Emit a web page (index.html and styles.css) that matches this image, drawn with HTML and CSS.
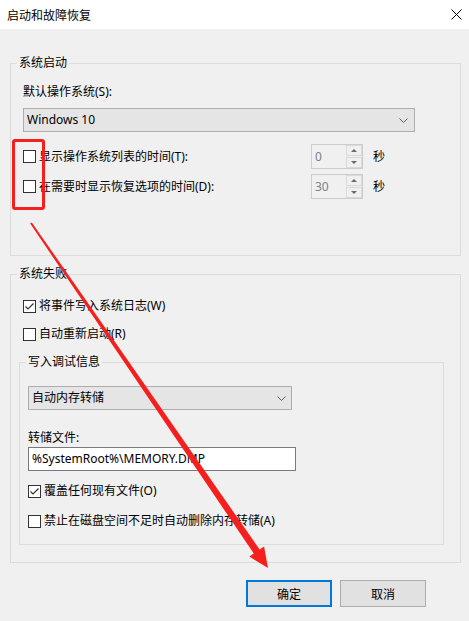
FILE: index.html
```html
<!DOCTYPE html>
<html lang="zh-CN">
<head>
<meta charset="utf-8">
<title>启动和故障恢复</title>
<link rel="stylesheet" href="styles.css">
</head>
<body>
<div class="window">
  <div class="titlebar">
    <span class="title">启动和故障恢复</span>
    <svg class="close" width="11" height="11" viewBox="0 0 11 11"><path d="M0.5 0.5 L10.5 10.5 M10.5 0.5 L0.5 10.5" stroke="#000" stroke-width="1" fill="none"/></svg>
  </div>
  <div class="content">
    <fieldset class="group g1">
      <legend>系统启动</legend>
      <div class="label">默认操作系统(S):</div>
      <div class="select wide"><span>Windows 10</span><svg width="9" height="5" viewBox="0 0 9 5"><path d="M0.5 0.5 L4.5 4.5 L8.5 0.5" stroke="#5a5a5a" fill="none"/></svg></div>
      <div class="timerows">
        <div class="timerow">
          <div class="check"><span class="box"></span><span>显示操作系统列表的时间(T):</span></div>
          <div class="spin"><span class="val">0</span><div class="btns"><span><i class="up"></i></span><span><i class="down"></i></span></div></div>
          <span class="unit">秒</span>
        </div>
        <div class="timerow">
          <div class="check"><span class="box"></span><span>在需要时显示恢复选项的时间(D):</span></div>
          <div class="spin"><span class="val">30</span><div class="btns"><span><i class="up"></i></span><span><i class="down"></i></span></div></div>
          <span class="unit">秒</span>
        </div>
      </div>
    </fieldset>

    <fieldset class="group g2">
      <legend>系统失败</legend>
      <div class="check row r1"><span class="box checked"><svg width="11" height="11" viewBox="0 0 11 11"><path d="M1.5 5.5 L4 8 L9.5 2.5" stroke="#333" stroke-width="1.2" fill="none"/></svg></span><span>将事件写入系统日志(W)</span></div>
      <div class="check row r2"><span class="box"></span><span>自动重新启动(R)</span></div>
      <fieldset class="group g3">
        <legend>写入调试信息</legend>
        <div class="select narrow"><span>自动内存转储</span><svg width="9" height="5" viewBox="0 0 9 5"><path d="M0.5 0.5 L4.5 4.5 L8.5 0.5" stroke="#5a5a5a" fill="none"/></svg></div>
        <div class="label dumplabel">转储文件:</div>
        <div class="textbox">%SystemRoot%\MEMORY.DMP</div>
        <div class="check row r3"><span class="box checked"><svg width="11" height="11" viewBox="0 0 11 11"><path d="M1.5 5.5 L4 8 L9.5 2.5" stroke="#333" stroke-width="1.2" fill="none"/></svg></span><span>覆盖任何现有文件(O)</span></div>
        <div class="check row r4"><span class="box"></span><span>禁止在磁盘空间不足时自动删除内存转储(A)</span></div>
      </fieldset>
    </fieldset>

    <div class="buttons">
      <button class="btn default">确定</button>
      <button class="btn">取消</button>
    </div>
  </div>

  <div class="mark-rect"></div>
  <svg class="mark-arrow" width="469" height="621" viewBox="0 0 469 621">
    <polygon points="31.8,222.4 259.6,549.5 264.1,546.4 268,568 249.3,556.6 253.8,553.5 30.2,223.6" fill="#f5201e"/>
  </svg>
</div>
</body>
</html>
```

FILE: styles.css
```css
html, body {
  margin: 0;
  padding: 0;
}
body {
  background: #f0f0f0;
  font-family: "Noto Sans", "Noto Sans CJK SC", sans-serif;
  font-size: 12px;
  line-height: 16px;
  color: #000;
  width: 469px;
  height: 621px;
  overflow: hidden;
}
.window {
  position: relative;
  height: 621px;
}
.titlebar {
  height: 29px;
  background: #fff;
  display: flex;
  align-items: center;
  justify-content: space-between;
  padding: 0 7px 0 7px;
  box-sizing: border-box;
}
.title {
  font-family: "Noto Sans CJK SC", sans-serif;
}
.close {
  display: block;
  margin-top: -1px;
}
.content {
  padding: 26px 8px 0 10px;
}
.group {
  margin: 0;
  min-width: 0;
  border: 1px solid #dcdcdc;
}
.group > legend {
  padding: 0 2px;
  line-height: 16px;
  color: #000;
}
.g1 {
  padding: 13px 0 56px 12px;
}
.g1 > legend {
  margin-left: -6px;
}
.label {
  height: 16px;
}
.select {
  margin-top: 8px;
  height: 24px;
  box-sizing: border-box;
  border: 1px solid #adadad;
  background: #e5e5e5;
  display: flex;
  align-items: center;
  justify-content: space-between;
  padding: 0 6px 0 3px;
}
.select svg {
  display: block;
}
.select.wide {
  width: 392px;
}
.timerows {
  margin-top: 12px;
  display: flex;
  flex-direction: column;
  gap: 5px;
}
.timerow {
  display: grid;
  grid-template-columns: 288px 52px auto;
  align-items: center;
  height: 25px;
}
.check {
  display: flex;
  align-items: center;
  gap: 3px;
  height: 16px;
}
.box {
  width: 13px;
  height: 13px;
  box-sizing: border-box;
  border: 1px solid #333;
  background: #fff;
  flex: none;
  display: flex;
  align-items: center;
  justify-content: center;
}
.box svg {
  display: block;
}
.spin {
  width: 52px;
  height: 25px;
  box-sizing: border-box;
  border: 1px solid #cccccc;
  background: #f0f0f0;
  display: flex;
}
.spin .val {
  flex: 1;
  padding-left: 3px;
  line-height: 23px;
  color: #7a8088;
}
.btns {
  width: 16px;
  display: flex;
  flex-direction: column;
  gap: 1px;
}
.btns span {
  flex: 1;
  border: 1px solid #dadada;
  display: flex;
  align-items: center;
  justify-content: center;
}
.btns i {
  width: 0;
  height: 0;
  border-left: 3px solid transparent;
  border-right: 3px solid transparent;
}
.btns i.up {
  border-bottom: 3px solid #6a6a6a;
}
.btns i.down {
  border-top: 3px solid #6a6a6a;
}
.unit {
  margin-left: 10px;
}
.group.g2 {
  margin-top: 10px;
  padding: 16px 16px 17px 8px;
}
.g2 > legend {
  margin-left: -2px;
}
.row {
  padding-left: 4px;
}
.r2 {
  margin-top: 12px;
}
.group.g3 {
  margin-top: 12px;
  padding: 16px 0 15px 8px;
}
.g3 > legend {
  margin-left: -2px;
}
.g3 .row {
  padding-left: 0;
}
.select.narrow {
  margin-top: 0;
  width: 264px;
  padding: 0 5px 0 3px;
}
.dumplabel {
  margin-top: 20px;
}
.textbox {
  margin-top: 1px;
  width: 268px;
  height: 24px;
  box-sizing: border-box;
  border: 1px solid #7a7a7a;
  background: #fff;
  padding-left: 3px;
  line-height: 22px;
}
.r3 {
  margin-top: 12px;
}
.r4 {
  margin-top: 14px;
}
.buttons {
  margin-top: 17px;
  display: flex;
  justify-content: flex-end;
  gap: 8px;
  padding-right: 35px;
}
.btn {
  width: 86px;
  height: 27px;
  box-sizing: border-box;
  background: #e1e1e1;
  border: 1px solid #adadad;
  font-family: "Noto Sans CJK SC", sans-serif;
  font-size: 12px;
  color: #000;
  padding: 0;
  margin: 0;
}
.btn.default {
  border: 2px solid #0078d7;
}
.mark-rect {
  position: absolute;
  left: 12px;
  top: 139px;
  width: 33px;
  height: 71px;
  box-sizing: border-box;
  border: 3px solid #f5201e;
  border-radius: 3px;
}
.mark-arrow {
  position: absolute;
  left: 0;
  top: 0;
  pointer-events: none;
}
```
